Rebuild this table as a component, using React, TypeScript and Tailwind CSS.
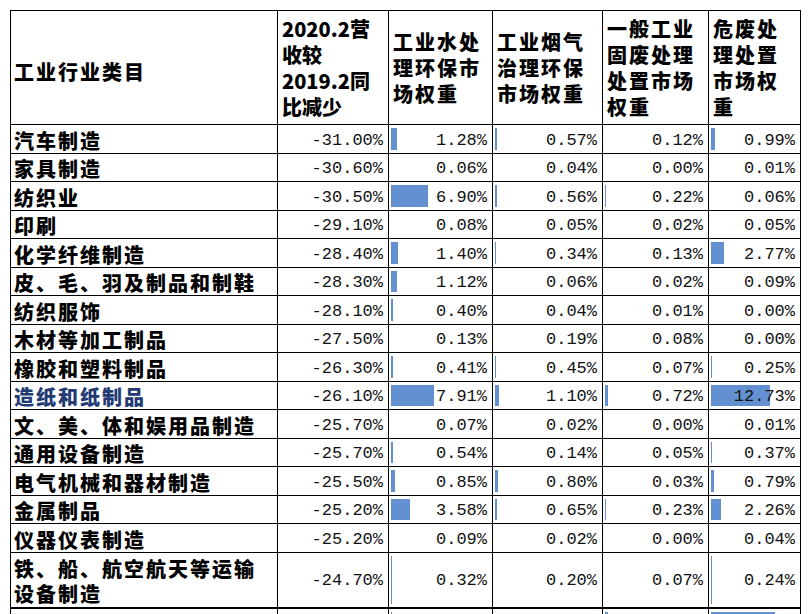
const rows = [
  { name: "汽车制造", yoy: "-31.00%", v: [1.28, 0.57, 0.12, 0.99] },
  { name: "家具制造", yoy: "-30.60%", v: [0.06, 0.04, 0.0, 0.01] },
  { name: "纺织业", yoy: "-30.50%", v: [6.9, 0.56, 0.22, 0.06] },
  { name: "印刷", yoy: "-29.10%", v: [0.08, 0.05, 0.02, 0.05] },
  { name: "化学纤维制造", yoy: "-28.40%", v: [1.4, 0.34, 0.13, 2.77] },
  { name: "皮、毛、羽及制品和制鞋", yoy: "-28.30%", v: [1.12, 0.06, 0.02, 0.09] },
  { name: "纺织服饰", yoy: "-28.10%", v: [0.4, 0.04, 0.01, 0.0] },
  { name: "木材等加工制品", yoy: "-27.50%", v: [0.13, 0.19, 0.08, 0.0] },
  { name: "橡胶和塑料制品", yoy: "-26.30%", v: [0.41, 0.45, 0.07, 0.25] },
  { name: "造纸和纸制品", yoy: "-26.10%", v: [7.91, 1.1, 0.72, 12.73], link: true },
  { name: "文、美、体和娱用品制造", yoy: "-25.70%", v: [0.07, 0.02, 0.0, 0.01] },
  { name: "通用设备制造", yoy: "-25.70%", v: [0.54, 0.14, 0.05, 0.37] },
  { name: "电气机械和器材制造", yoy: "-25.50%", v: [0.85, 0.8, 0.03, 0.79] },
  { name: "金属制品", yoy: "-25.20%", v: [3.58, 0.65, 0.23, 2.26] },
  { name: "仪器仪表制造", yoy: "-25.20%", v: [0.09, 0.02, 0.0, 0.04] },
];

// px of data bar per 1% in each weight column
const barScale = [5.44, 4, 5.41, 4.7];

const cjk = "font-['Noto_Sans_CJK_SC',sans-serif] font-black";
const mono = "font-['Liberation_Mono',monospace]";

function Bar({ value, scale }: { value: number; scale: number }) {
  const w = Math.floor(value * scale);
  if (w < 1) return null;
  return (
    <div
      className="absolute left-[2px] top-[3px] bottom-[3px] bg-[#6390d0]"
      style={{ width: w }}
    />
  );
}

function NumCell({ text, value, scale }: { text: string; value?: number; scale?: number }) {
  return (
    <td
      className={`relative border border-black pr-[5px] pt-[3px] text-right align-middle ${mono} text-[17px] leading-[18px] text-[#111]`}
    >
      {value !== undefined && scale !== undefined && <Bar value={value} scale={scale} />}
      <span className="relative">{text}</span>
    </td>
  );
}

function HeadCell({ lines, tight }: { lines: string[]; tight?: boolean }) {
  return (
    <th
      className={`border border-black pl-[4px] text-left align-middle ${cjk} text-[20px] leading-[26px] ${
        tight ? "tracking-normal" : "tracking-[2px]"
      }`}
    >
      {lines.map((l, i) => (
        <div key={i} className="whitespace-nowrap">
          {l}
        </div>
      ))}
    </th>
  );
}

export default function App() {
  return (
    <div className="h-screen overflow-hidden bg-white pl-[10px] pt-[10px] text-black">
      <table className="w-[791px] table-fixed border-collapse">
        <colgroup>
          <col className="w-[267px]" />
          <col className="w-[111px]" />
          <col className="w-[104px]" />
          <col className="w-[110px]" />
          <col className="w-[106px]" />
          <col className="w-[92px]" />
        </colgroup>
        <thead>
          <tr className="h-[114px]">
            <th
              className={`border border-black pl-[3px] pt-[8px] text-left align-middle ${cjk} text-[20px] leading-[26px] tracking-[2px]`}
            >
              工业行业类目
            </th>
            <HeadCell tight lines={["2020.2营", "收较", "2019.2同", "比减少"]} />
            <HeadCell lines={["工业水处", "理环保市", "场权重"]} />
            <HeadCell lines={["工业烟气", "治理环保", "市场权重"]} />
            <HeadCell lines={["一般工业", "固废处理", "处置市场", "权重"]} />
            <HeadCell lines={["危废处", "理处置", "市场权", "重"]} />
          </tr>
        </thead>
        <tbody>
          {rows.map((r, i) => (
            <tr key={r.name} className={i % 2 === 0 ? "h-[29px]" : "h-[28px]"}>
              <td
                className={`border border-black pl-[3px] pt-[3px] align-middle whitespace-nowrap ${cjk} text-[20px] leading-[22px] tracking-[2px] ${
                  r.link ? "text-[#233a73]" : ""
                }`}
              >
                {r.name}
              </td>
              <NumCell text={r.yoy} />
              {r.v.map((v, j) => (
                <NumCell key={j} text={`${v.toFixed(2)}%`} value={v} scale={barScale[j]} />
              ))}
            </tr>
          ))}
          <tr className="h-[55px]">
            <td
              className={`border border-black pl-[3px] pt-[2px] align-middle ${cjk} text-[20px] leading-[25px] tracking-[2px]`}
            >
              铁、船、航空航天等运输
              <br />
              设备制造
            </td>
            <NumCell text="-24.70%" />
            {[0.32, 0.2, 0.07, 0.24].map((v, j) => (
              <NumCell key={j} text={`${v.toFixed(2)}%`} value={v} scale={barScale[j]} />
            ))}
          </tr>
          <tr className="h-[40px] border-t-2 border-black">
            <td className="border border-black" />
            <td className="border border-black" />
            <td className="relative border border-black">
              <Bar value={0.3} scale={barScale[0]} />
            </td>
            <td className="relative border border-black" />
            <td className="relative border border-black">
              <Bar value={0.7} scale={barScale[2]} />
            </td>
            <td className="relative border border-black">
              <Bar value={13.8} scale={barScale[3]} />
            </td>
          </tr>
        </tbody>
      </table>
    </div>
  );
}
